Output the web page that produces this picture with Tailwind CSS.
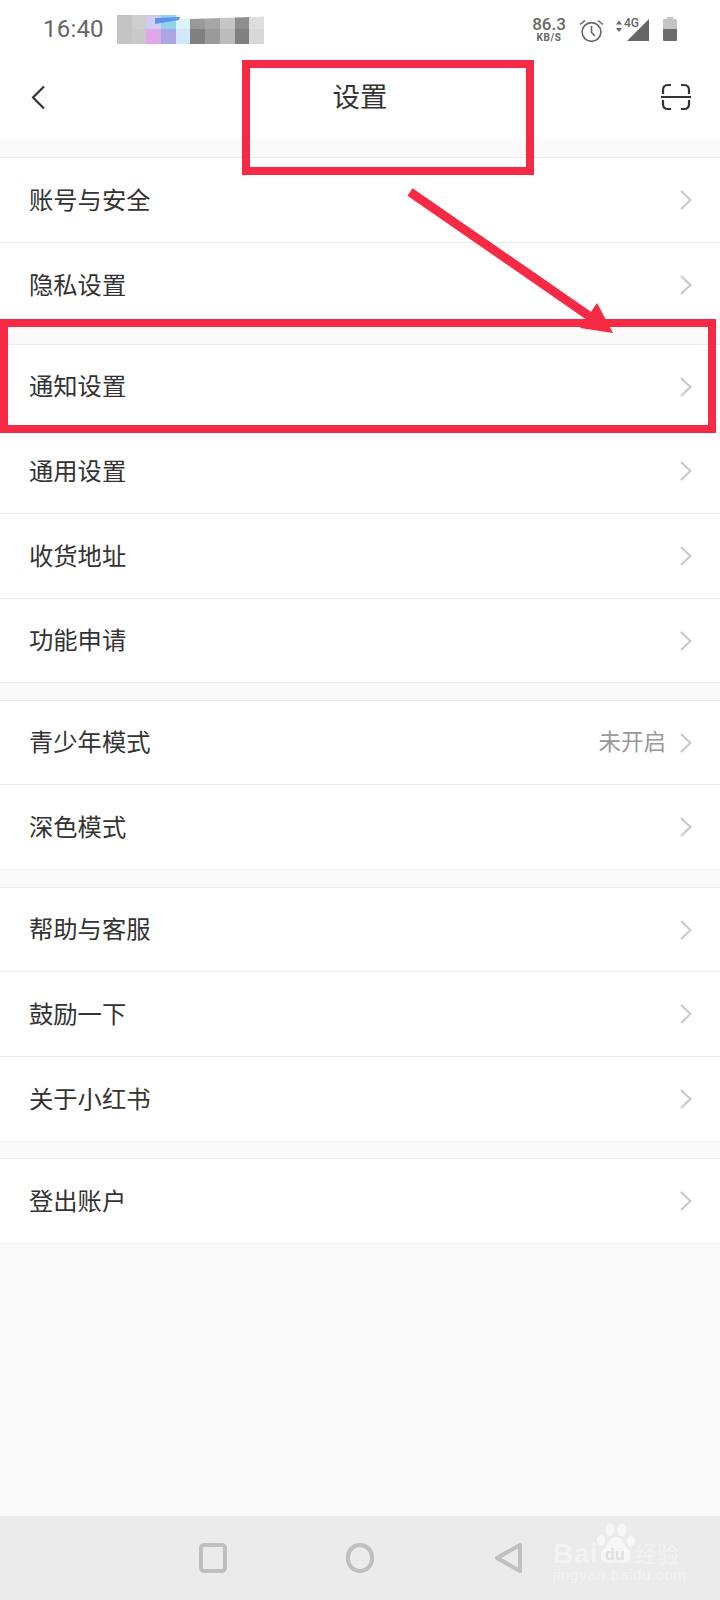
<!DOCTYPE html>
<html lang="zh">
<head>
    <meta charset="UTF-8">
    <meta name="viewport" content="width=device-width, initial-scale=1.0">
    <title>设置</title>
    <script src="https://cdn.jsdelivr.net/npm/@tailwindcss/browser@4"></script>
</head>
<body class="bg-[#fafafa]">
<div class="relative w-[720px] h-[1600px] flex flex-col overflow-hidden font-['Roboto','Noto_Sans_CJK_SC',sans-serif] text-[#333]">

    <!-- status bar -->
    <div class="h-[60px] bg-white flex items-center pl-[43px] pr-[43px] pb-[2px]">
        <span class="text-[24px] leading-none text-[#666] w-[74px] tracking-[0.2px]">16:40</span>
        <div class="relative grid grid-cols-10 w-[147px] h-[29px] blur-[0.5px]">
            <div class="bg-[#c4c4c4]"></div><div class="bg-[#cecece]"></div><div class="bg-[#cfcdf0]"></div><div class="bg-[#8fd3ea]"></div><div class="bg-[#d8f6fb]"></div><div class="bg-[#999999]"></div><div class="bg-[#a6a6a6]"></div><div class="bg-[#c6c6c6]"></div><div class="bg-[#8e8e8e]"></div><div class="bg-[#dedede]"></div>
            <div class="bg-[#c4c4c4]"></div><div class="bg-[#c9c9c9]"></div><div class="bg-[#e0a8e8]"></div><div class="bg-[#aaa5e5]"></div><div class="bg-[#d0e8fa]"></div><div class="bg-[#808080]"></div><div class="bg-[#9a9a9a]"></div><div class="bg-[#bcbcbc]"></div><div class="bg-[#808080]"></div><div class="bg-[#d8d8d8]"></div>
            <svg class="absolute left-0 top-0" width="147" height="29" viewBox="0 0 147 29">
                <path d="M38 3 63 2 62 5 38 9Z" fill="#5f93ea"/>
                <path d="M63 0H147V1.500L75 4H63Z" fill="#ffffff"/>
            </svg>
        </div>
        <div class="ml-auto flex items-center">
            <div class="flex flex-col items-center w-[34px] ml-[2px] text-[#666] font-medium">
                <span class="text-[17px] leading-[17px]">86.3</span>
                <span class="text-[10px] leading-[10px] tracking-[0.6px] font-bold">KB/S</span>
            </div>
            <svg class="ml-[13px] translate-y-px" width="25" height="25" viewBox="0 0 25 25" fill="none" stroke="#666" stroke-width="1.6">
                <circle cx="12.5" cy="14" r="9.4"/>
                <path d="M12.5 8v6.5l3.5 3.5"/>
                <path d="M1 6.5 6 2.5M24 6.5 19 2.5"/>
            </svg>
            <svg class="ml-[9px]" width="37" height="25" viewBox="0 0 37 25">
                <path d="M3 7.5 6 3.5 9 7.5ZM3 11 9 11 6 15Z" fill="#666"/>
                <path d="M36 2V24H14Z" fill="#666"/>
                <text x="11" y="10" font-size="12" font-weight="500" fill="#666" font-family="Roboto">4G</text>
            </svg>
            <svg class="ml-[13px]" width="14" height="24" viewBox="0 0 14 24">
                <path d="M4 0H10V2H13Q14 2 14 3V12H0V3Q0 2 1 2H4Z" fill="#c4c4c4"/>
                <path d="M0 12H14V23Q14 24 13 24H1Q0 24 0 23Z" fill="#6b6b6b"/>
            </svg>
        </div>
    </div>

    <!-- title bar -->
    <div class="h-[80px] bg-white grid grid-cols-3 items-center pl-[31px] pr-[29px] pb-[6px]">
        <svg width="15" height="25" viewBox="0 0 15 25" fill="none" stroke="#333" stroke-width="2.2">
            <path d="M13 1.5 2 12.5 13 23.5"/>
        </svg>
        <span class="text-[27.5px] leading-none text-center pr-[2px] pt-[1px]">设置</span>
        <svg class="justify-self-end" width="30" height="28" viewBox="0 0 30 28" fill="none" stroke="#333" stroke-width="2.2">
            <path d="M2 11V7Q2 2 7 2H10M20 2H23Q28 2 28 7V11M2 17V21Q2 26 7 26H10M20 26H23Q28 26 28 21V17"/>
            <path d="M0 14H30" stroke-width="2"/>
        </svg>
    </div>

    <!-- settings list -->
    <div class="mt-[17px] flex flex-col gap-[17px]">
        <div class="bg-white border-y border-[#ececec] divide-y divide-[#ececec] h-[170px]">
            <div class="h-[85px] flex items-center justify-between pl-[29px] pr-[28px] text-[24.3px]"><span class="translate-y-px">账号与安全</span><svg width="12" height="20" viewBox="0 0 12 20" fill="none" stroke="#c8c8c8" stroke-width="2"><path d="M1 1 10.500 10 1 19"/></svg></div>
            <div class="h-[84px] flex items-center justify-between pl-[29px] pr-[28px] text-[24.3px]"><span class="translate-y-px">隐私设置</span><svg width="12" height="20" viewBox="0 0 12 20" fill="none" stroke="#c8c8c8" stroke-width="2"><path d="M1 1 10.500 10 1 19"/></svg></div>
        </div>
        <div class="bg-white border-y border-[#ececec] divide-y divide-[#ececec]">
            <div class="h-[84px] flex items-center justify-between pl-[29px] pr-[28px] text-[24.3px]"><span class="translate-y-px">通知设置</span><svg width="12" height="20" viewBox="0 0 12 20" fill="none" stroke="#c8c8c8" stroke-width="2"><path d="M1 1 10.500 10 1 19"/></svg></div>
            <div class="h-[85px] flex items-center justify-between pl-[29px] pr-[28px] text-[24.3px]"><span class="translate-y-px">通用设置</span><svg width="12" height="20" viewBox="0 0 12 20" fill="none" stroke="#c8c8c8" stroke-width="2"><path d="M1 1 10.500 10 1 19"/></svg></div>
            <div class="h-[85px] flex items-center justify-between pl-[29px] pr-[28px] text-[24.3px]"><span class="translate-y-px">收货地址</span><svg width="12" height="20" viewBox="0 0 12 20" fill="none" stroke="#c8c8c8" stroke-width="2"><path d="M1 1 10.500 10 1 19"/></svg></div>
            <div class="h-[83px] flex items-center justify-between pl-[29px] pr-[28px] text-[24.3px]"><span class="translate-y-px">功能申请</span><svg width="12" height="20" viewBox="0 0 12 20" fill="none" stroke="#c8c8c8" stroke-width="2"><path d="M1 1 10.500 10 1 19"/></svg></div>
        </div>
        <div class="bg-white border-y border-[#ececec] divide-y divide-[#ececec]">
            <div class="h-[84px] flex items-center justify-between pl-[29px] pr-[28px] text-[24.3px]"><span class="translate-y-px">青少年模式</span><span class="ml-auto mr-[14px] text-[22.5px] text-[#999]">未开启</span><svg width="12" height="20" viewBox="0 0 12 20" fill="none" stroke="#c8c8c8" stroke-width="2"><path d="M1 1 10.500 10 1 19"/></svg></div>
            <div class="h-[84px] flex items-center justify-between pl-[29px] pr-[28px] text-[24.3px]"><span class="translate-y-px">深色模式</span><svg width="12" height="20" viewBox="0 0 12 20" fill="none" stroke="#c8c8c8" stroke-width="2"><path d="M1 1 10.500 10 1 19"/></svg></div>
        </div>
        <div class="bg-white border-y border-[#ececec] divide-y divide-[#ececec]">
            <div class="h-[84px] flex items-center justify-between pl-[29px] pr-[28px] text-[24.3px]"><span class="translate-y-px">帮助与客服</span><svg width="12" height="20" viewBox="0 0 12 20" fill="none" stroke="#c8c8c8" stroke-width="2"><path d="M1 1 10.500 10 1 19"/></svg></div>
            <div class="h-[85px] flex items-center justify-between pl-[29px] pr-[28px] text-[24.3px]"><span class="translate-y-px">鼓励一下</span><svg width="12" height="20" viewBox="0 0 12 20" fill="none" stroke="#c8c8c8" stroke-width="2"><path d="M1 1 10.500 10 1 19"/></svg></div>
            <div class="h-[84px] flex items-center justify-between pl-[29px] pr-[28px] text-[24.3px]"><span class="translate-y-px">关于小红书</span><svg width="12" height="20" viewBox="0 0 12 20" fill="none" stroke="#c8c8c8" stroke-width="2"><path d="M1 1 10.500 10 1 19"/></svg></div>
        </div>
        <div class="-mt-px bg-white border-y border-[#f0f0f0]">
            <div class="h-[84px] flex items-center justify-between pl-[29px] pr-[28px] text-[24.3px]"><span class="translate-y-px">登出账户</span><svg width="12" height="20" viewBox="0 0 12 20" fill="none" stroke="#c8c8c8" stroke-width="2"><path d="M1 1 10.500 10 1 19"/></svg></div>
        </div>
    </div>

    <!-- system nav bar -->
    <div class="mt-auto h-[84px] bg-[#ebebeb] flex items-center pl-[199px] pb-[1px]">
        <div class="w-[28px] h-[30px] rounded-[5px] border-[4px] border-[#bfbfbf]"></div>
        <div class="ml-[119px] w-[28px] h-[30px] rounded-full border-[4px] border-[#bfbfbf]"></div>
        <svg class="ml-[121px]" width="27" height="30" viewBox="0 0 27 30" fill="none" stroke="#bfbfbf" stroke-width="4" stroke-linejoin="round"><path d="M25 2V28L2 15Z"/></svg>
    </div>

    <!-- baidu watermark -->
    <div class="absolute left-[553px] top-[1523px] w-[130px] h-[64px] text-[#f3f3f3]">
        <svg class="absolute left-[44px] top-0" width="38" height="42" viewBox="0 0 38 42" fill="#f7f7f7">
            <ellipse cx="13" cy="6.500" rx="4.500" ry="6.500"/>
            <ellipse cx="25" cy="7" rx="4.500" ry="6.500"/>
            <ellipse cx="4" cy="17" rx="4" ry="5.500"/>
            <ellipse cx="34" cy="18" rx="4" ry="5.500"/>
            <path d="M19 14C25 14 26 22 32 27 36 33 32 41 25 40 20 39 17 39 12 40 5 41 1 33 6 27 11 22 13 14 19 14Z"/>
        </svg>
        <span class="absolute left-0 top-[15px] text-[28px] leading-[32px] font-bold font-['Liberation_Sans',sans-serif] tracking-[0.5px]">Bai</span>
        <span class="absolute left-[52px] top-[23px] text-[16px] leading-[18px] font-bold text-[#e0e0e0] font-['Liberation_Sans',sans-serif]">du</span>
        <span class="absolute left-[82px] top-[16px] text-[22px] leading-[26px] font-['Noto_Sans_CJK_SC',sans-serif]">经验</span>
        <span class="absolute left-0 top-[43px] text-[15px] leading-[18px] tracking-[0.76px] font-['Liberation_Sans',sans-serif] whitespace-nowrap">jingyan.baidu.com</span>
    </div>

    <!-- red annotations -->
    <div class="absolute left-[242px] top-[60px] w-[292px] h-[115px] border-[8px] border-[#f62a45]"></div>
    <div class="absolute left-0 top-[319px] w-[716px] h-[114px] border-[8px] border-[#f62a45]"></div>
    <svg class="absolute left-0 top-0" width="720" height="400" viewBox="0 0 720 400" fill="#f62a45">
        <path d="M410 192 592 318" stroke="#f62a45" stroke-width="9"/>
        <path d="M597 303 580 328 613 333Z"/>
    </svg>
</div>
</body>
</html>
